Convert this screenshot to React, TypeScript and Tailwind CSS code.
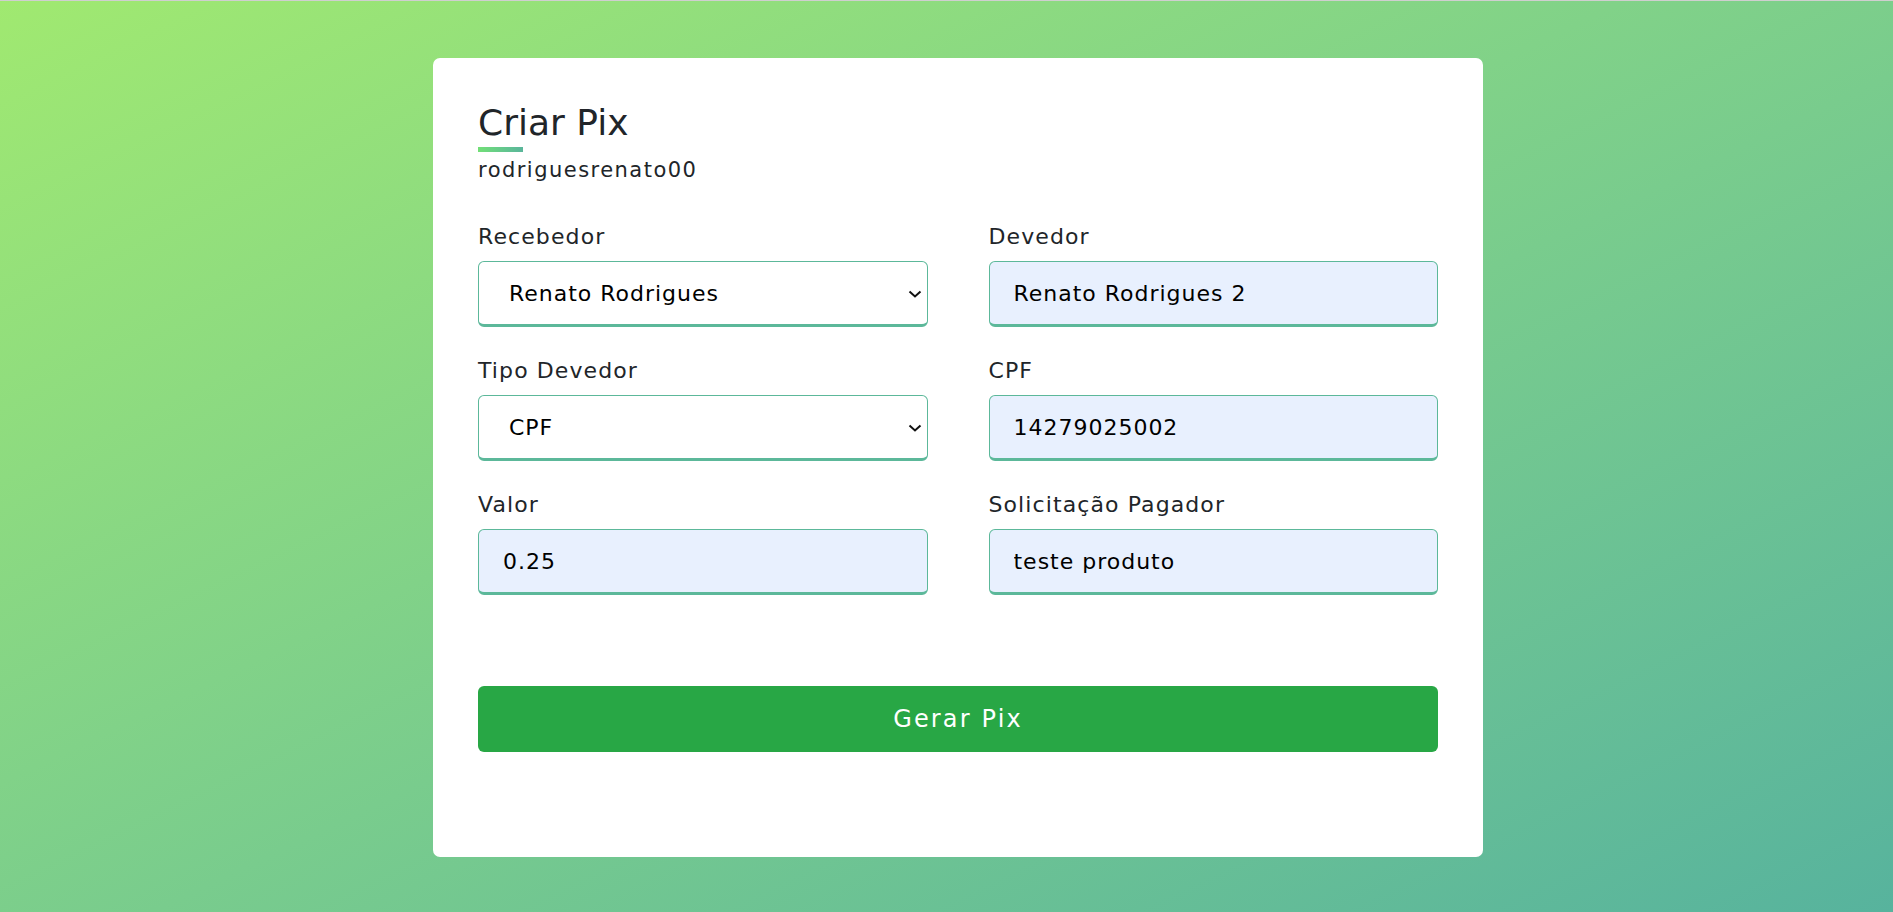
import { useState } from "react"

const font = { fontFamily: '"DejaVu Sans", Verdana, sans-serif' }

function Chevron() {
  return (
    <svg
      className="pointer-events-none absolute right-[6px] top-1/2 -translate-y-1/2"
      width="14"
      height="8"
      viewBox="0 0 14 8"
      fill="none"
    >
      <path d="M1.5 1.5 7 6.5 12.5 1.5" stroke="#111" strokeWidth="2" />
    </svg>
  )
}

function Field({ label, children }: { label: string; children: React.ReactNode }) {
  return (
    <div className="flex flex-col">
      <label className="text-[22px] leading-[33px] tracking-[0.05em] text-[#212529]">{label}</label>
      <div className="mt-[8px]">{children}</div>
    </div>
  )
}

function TextInput({ value }: { value: string }) {
  const [v, setV] = useState(value)
  return (
    <input
      value={v}
      onChange={(e) => setV(e.target.value)}
      className="block h-[66px] w-full rounded-[6px] border border-b-[3px] border-[#5cb89a] bg-[#e8f0fe] pl-[24px] text-[22px] tracking-[0.045em] text-black outline-none"
      style={font}
    />
  )
}

function SelectInput({ value, options }: { value: string; options: string[] }) {
  const [v, setV] = useState(value)
  return (
    <div className="relative">
      <select
        value={v}
        onChange={(e) => setV(e.target.value)}
        className="block h-[66px] w-full appearance-none rounded-[6px] border border-b-[3px] border-[#5cb89a] bg-white pl-[30px] text-[22px] tracking-[0.045em] text-black outline-none"
        style={font}
      >
        {options.map((o) => (
          <option key={o}>{o}</option>
        ))}
      </select>
      <Chevron />
    </div>
  )
}

export default function App() {
  return (
    <div
      className="flex min-h-screen justify-center border-t border-[#cfcfcf] bg-linear-to-br from-[#a0e970] to-[#57b39d] pl-[23px] pt-[57px] pb-[55px]"
      style={font}
    >
      <div className="w-[1050px] rounded-[7px] bg-white px-[45px] pt-[43px] pb-[105px]">
        {/* Header */}
        <h1 className="text-[36px] leading-[44px] font-normal text-[#212529]">Criar Pix</h1>
        <div className="mt-[2px] h-[5px] w-[45px] bg-linear-to-r from-[#72df76] to-[#5ab59a]" />
        <p className="mt-[3px] text-[21px] leading-[30px] tracking-[0.07em] text-[#212529]">rodriguesrenato00</p>

        {/* Form */}
        <div className="mt-[35px] grid grid-cols-2 gap-x-[61px] gap-y-[27px]">
          <Field label="Recebedor">
            <SelectInput value="Renato Rodrigues" options={["Renato Rodrigues"]} />
          </Field>
          <Field label="Devedor">
            <TextInput value="Renato Rodrigues 2" />
          </Field>
          <Field label="Tipo Devedor">
            <SelectInput value="CPF" options={["CPF", "CNPJ"]} />
          </Field>
          <Field label="CPF">
            <TextInput value="14279025002" />
          </Field>
          <Field label="Valor">
            <TextInput value="0.25" />
          </Field>
          <Field label="Solicitação Pagador">
            <TextInput value="teste produto" />
          </Field>
        </div>

        <button className="mt-[91px] block h-[66px] w-full rounded-[6px] bg-[#28a745] text-[24px] tracking-[0.09em] text-white">
          Gerar Pix
        </button>
      </div>
    </div>
  )
}
